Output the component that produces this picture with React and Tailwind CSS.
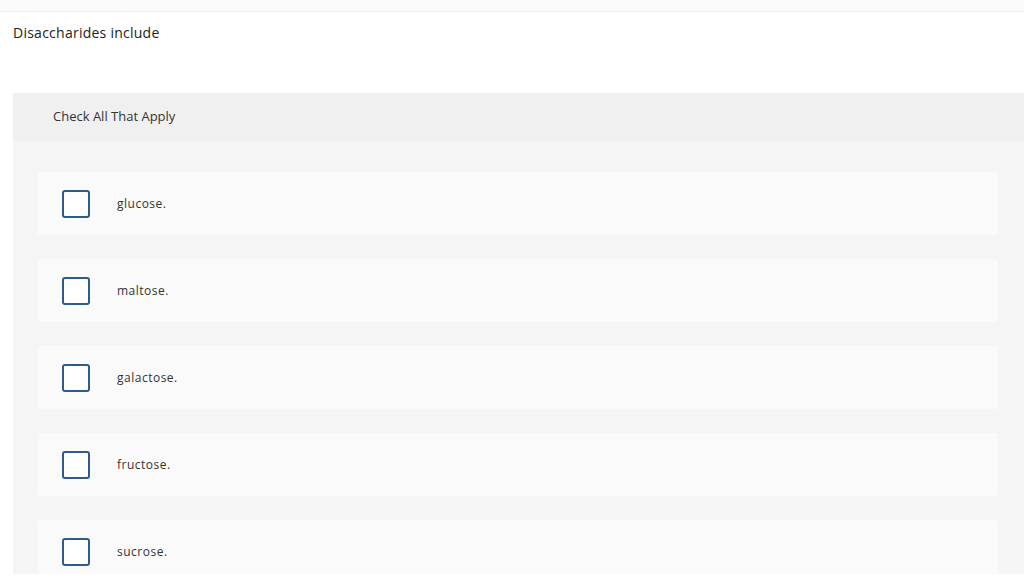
import React from 'react';

const options = ['glucose.', 'maltose.', 'galactose.', 'fructose.', 'sucrose.'];

export default function App() {
  return (
    <div className="w-[1024px] h-[586px] overflow-hidden bg-white text-[#333333]" style={{ fontFamily: '"Open Sans", "Liberation Sans", sans-serif' }}>
      {/* top strip */}
      <div className="h-[12px] bg-[#fafafa] border-b border-[#f0f0f0]" />

      <div className="pl-[13px]">
        <p className="pt-[12px] h-[81px] text-[14px] leading-[17px] tracking-[0.25px] text-[#222]">Disaccharides include</p>

        <div className="h-[481px] overflow-hidden bg-[#f5f5f5]">
          <div className="h-[48px] bg-[#f0f0f0] pl-[40px] flex items-center text-[13px]">
            Check All That Apply
          </div>

          <div className="pt-[31px] pl-[25px] pr-[26px] flex flex-col gap-[24px]">
            {options.map(opt => (
              <div key={opt} className="h-[63px] shrink-0 bg-[#fafafa] rounded-[3px] flex items-center pl-[24px]">
                <span className="w-[28px] h-[28px] bg-white border-2 border-[#2d5b8f] rounded-[3px] shrink-0" />
                <span className="ml-[27px] text-[12px] tracking-[0.5px]">{opt}</span>
              </div>
            ))}
          </div>
        </div>
      </div>
    </div>
  );
}
